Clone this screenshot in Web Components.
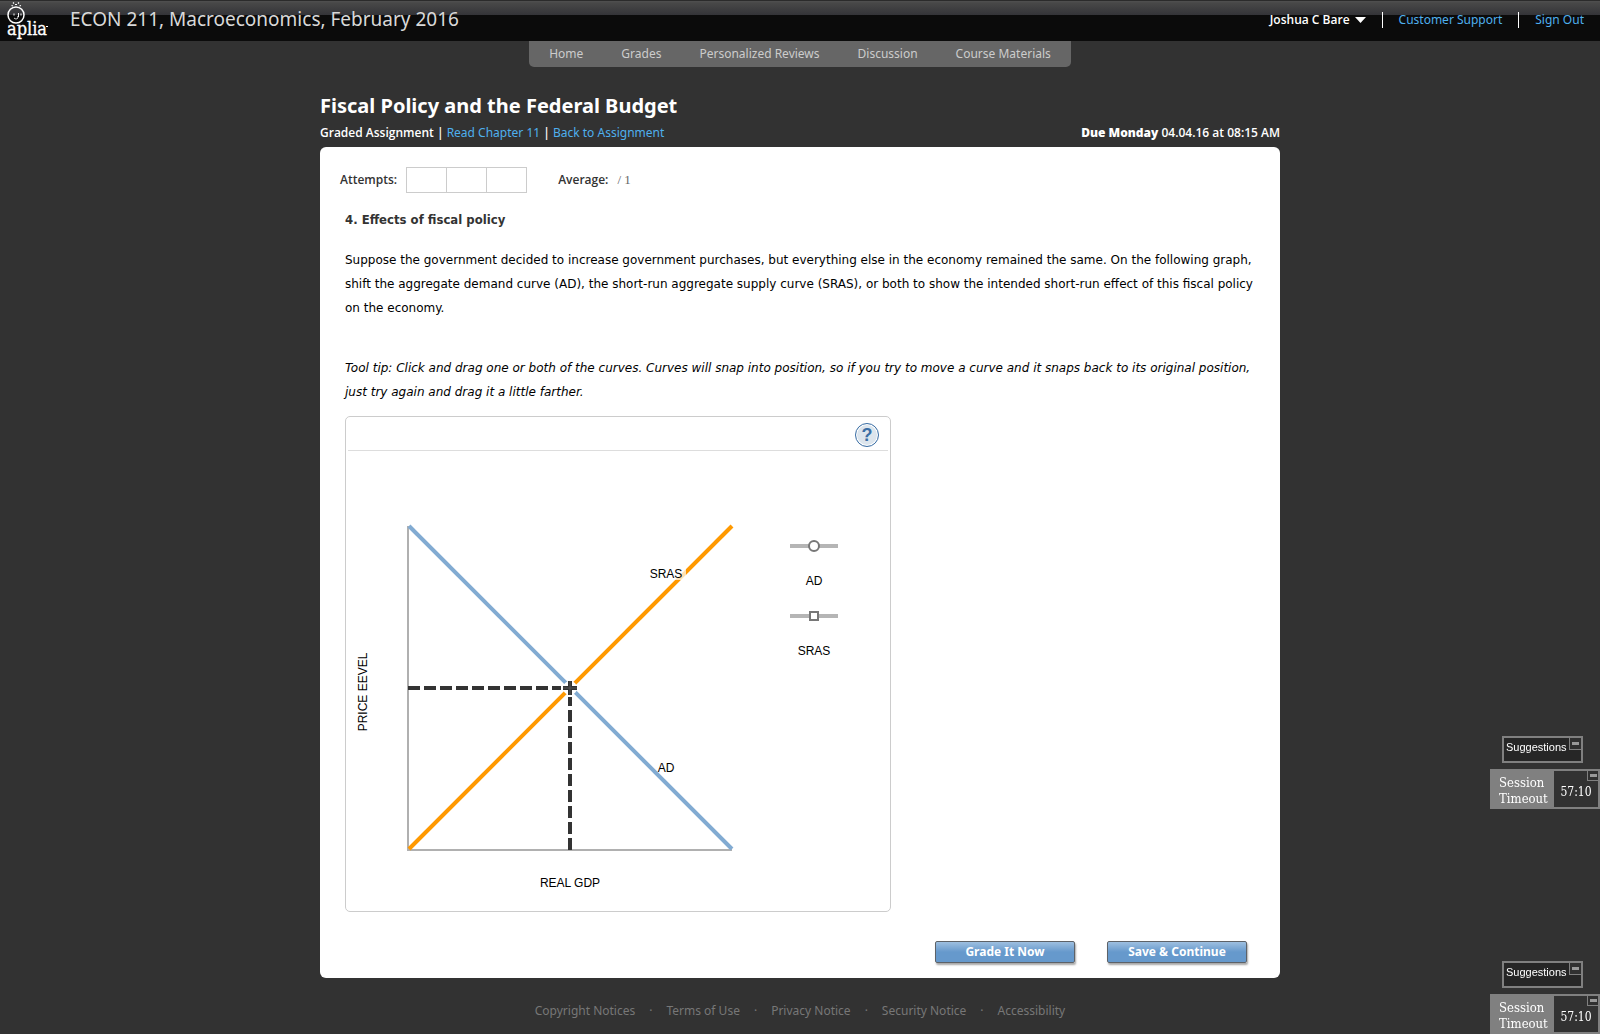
<!DOCTYPE html>
<html lang="en">
<head>
<meta charset="utf-8">
<title>Aplia: Fiscal Policy and the Federal Budget</title>
<style>
  body { margin: 0; background: #323232; color: #fff; font-family: "Noto Sans", "Open Sans", sans-serif; font-size: 12px; --link: #4fb0ee; --line: #ccc; --reading: "DejaVu Sans", sans-serif; --strong: "Open Sans", "Noto Sans", sans-serif; }
</style>
</head>
<body>
<aplia-page></aplia-page>
<script>
const define = (name, html) => {
  const template = document.createElement('template');
  template.innerHTML = html;
  customElements.define(name, class extends HTMLElement {
    constructor() {
      super();
      this.attachShadow({ mode: 'open' }).append(template.content.cloneNode(true));
    }
  });
};

define('aplia-logo', `
<style>
  :host { display: block; width: 44px; height: 41px; }
  svg { display: block; }
  text { font-family: "DejaVu Serif Condensed", "DejaVu Serif", serif; font-size: 18px; fill: #fff; stroke: #fff; stroke-width: .3px; }
</style>
<svg width="44" height="41" viewBox="0 0 44 41" role="img" aria-label="aplia">
  <g fill="none" stroke="#fff">
    <circle cx="9" cy="15" r="8" stroke-width="1.5"/>
    <path d="M4.500 5.500 6 6M6 2.500 7 3.500M11 3.500l1-1M12.500 6l1.500-.5M8 4.500h2" stroke-width="1.200"/>
    <path d="M7 13.500v2M14 13.500v2M11.500 13v4h-1.500" stroke-width="1"/>
    <path d="M7 18c1.500 1.500 3 1 4 0" stroke-width=".8"/>
  </g>
  <text x="0" y="35">aplia</text>
  <path d="M39 26.500h2" stroke="#fff"/>
</svg>`);

define('top-bar', `
<style>
  :host { display: flex; align-items: flex-start; justify-content: space-between; height: 41px; box-sizing: border-box; padding: 0 16px 0 7px;
    background: linear-gradient(#2b2b2b 1px, #505050 1px, #484848 3px, #343438 15px, #0b0b0b 15px); }
  .left, .right { display: flex; }
  .left { gap: 19px; }
  h1 { margin: 0; font-size: 19px; font-weight: 400; line-height: 39px; color: #d9d9d9; }
  .right { align-items: center; height: 39px; font-size: 12px; }
  a, button { line-height: 16px; }
  a { color: var(--link); text-decoration: none; padding-left: 16px; margin-left: 16px; border-left: 1px solid #fff; }
  button { border: 0; background: none; padding: 0; color: #fff; font: 600 12px/16px var(--strong); display: flex; align-items: center; gap: 5px; }
</style>
<div class="left"><aplia-logo></aplia-logo><h1><slot></slot></h1></div>
<div class="right">
  <button type="button">Joshua C Bare <svg width="11" height="6" aria-hidden="true"><path d="M0 0h11L5.500 6z" fill="#fff"/></svg></button>
  <a href="#support">Customer Support</a>
  <a href="#signout">Sign Out</a>
</div>`);

define('main-nav', `
<style>
  :host { display: flex; justify-content: center; }
  nav { display: flex; gap: 38px; padding: 0 20px; height: 26px; background: #666; border-radius: 0 0 5px 5px; }
  a { color: #ccc; font-size: 12px; line-height: 25px; text-decoration: none; white-space: nowrap; }
</style>
<nav aria-label="Course">
  <a href="#home">Home</a><a href="#grades">Grades</a><a href="#reviews">Personalized Reviews</a><a href="#discussion">Discussion</a><a href="#materials">Course Materials</a>
</nav>`);

define('assignment-head', `
<style>
  :host { display: block; padding-top: 24px; }
  h2 { margin: 0; font-size: 20px; line-height: 30px; font-weight: 700; }
  .row { display: flex; justify-content: space-between; padding-bottom: 3px; font: 600 12px/23px var(--strong); }
  a { color: var(--link); font-family: "Noto Sans", sans-serif; font-weight: 400; text-decoration: none; }
</style>
<h2>Fiscal Policy and the Federal Budget</h2>
<div class="row">
  <span>Graded Assignment | <a href="#chapter">Read Chapter 11</a> | <a href="#assignment">Back to Assignment</a></span>
  <span><b>Due Monday</b> 04.04.16 at 08:15 AM</span>
</div>`);

define('attempt-bar', `
<style>
  :host { display: flex; align-items: center; height: 26px; color: #333; font: 600 12px/24px var(--strong); }
  .boxes { display: flex; margin: 0 31px 0 9px; border: 1px solid var(--line); border-right: 0; }
  .boxes i { box-sizing: border-box; width: 40px; height: 24px; border-right: 1px solid var(--line); }
  .score { margin-left: 9px; font-family: "Liberation Serif", serif; font-size: 13px; font-weight: 400; color: #666; }
</style>
<span>Attempts:</span>
<span class="boxes"><i></i><i></i><i></i></span>
<span>Average:</span>
<span class="score">/ 1</span>`);

define('curve-graph', `
<style>
  :host { display: block; box-sizing: border-box; max-width: 546px; border: 1px solid var(--line); border-radius: 5px; padding: 0 2px; color: #000; }
  header { display: flex; justify-content: flex-end; align-items: center; height: 33px; padding: 0 9px 0 0; border-bottom: 1px solid #ddd; }
  button { box-sizing: border-box; width: 24px; height: 24px; margin-top: 2px; padding: 0; border: 1px solid #3a6ea5; border-radius: 50%; background: #dce5ed; box-shadow: inset 0 0 0 1px #fff; color: #3a6ea5; font: 700 18px/22px "Liberation Sans", sans-serif; }
  .body { display: flex; justify-content: space-between; padding: 0 50px 0 0; }
  svg { display: block; }
  text { font: 12px "Liberation Sans", sans-serif; fill: #000; text-anchor: middle; }
  .legend { display: flex; flex-direction: column; gap: 20px; padding-top: 87px; font: 12px/14px "Liberation Sans", sans-serif; text-align: center; }
  .legend div { display: flex; flex-direction: column; gap: 20px; }
</style>
<header><button type="button" aria-label="Help">?</button></header>
<div class="body">
  <svg width="400" height="460" viewBox="348 451 400 460" role="img" aria-label="Aggregate demand and supply">
    <path d="M408 526V850H732" fill="none" stroke="#b0b0b0" stroke-width="2"/>
    <path d="M409 526 732 849" stroke="#82abd2" stroke-width="4"/>
    <path d="M409 849 732 526" stroke="#ff9900" stroke-width="4"/>
    <circle cx="570" cy="688" r="7" fill="#fff"/>
    <path d="M408 688H561" stroke="#333" stroke-width="4" stroke-dasharray="12 4"/>
    <path d="M570 850V697" stroke="#333" stroke-width="4" stroke-dasharray="12 4"/>
    <path d="M563 688h14M570 681v14" stroke="#333" stroke-width="4"/>
    <path d="M563 688h14M570 681v14" stroke="#555" stroke-width="1"/>
    <rect x="648" y="566" width="38" height="14" fill="#fff" opacity=".7"/>
    <text x="666" y="578">SRAS</text>
    <text x="666" y="772">AD</text>
    <text x="570" y="887">REAL GDP</text>
    <text transform="translate(367 692) rotate(-90)">PRICE EEVEL</text>
  </svg>
  <div class="legend">
    <div><svg width="48" height="16" aria-hidden="true"><path d="M0 8h48" stroke="#b5b5b5" stroke-width="4"/><circle cx="24" cy="8" r="5" fill="#fff" stroke="#777" stroke-width="2"/></svg>AD</div>
    <div><svg width="48" height="16" aria-hidden="true"><path d="M0 8h48" stroke="#b5b5b5" stroke-width="4"/><rect x="20" y="4" width="8" height="8" fill="#fff" stroke="#777" stroke-width="2"/></svg>SRAS</div>
  </div>
</div>`);

define('action-button', `
<style>
  :host { display: block; }
  button { width: 140px; height: 22px; padding: 0; border: 1px solid #5d6268; border-radius: 2px; background: linear-gradient(#9dbfe0, #6699cc 50%); box-shadow: 1px 2px 2px rgba(0,0,0,.35); color: #fff; font: 700 12px/20px "Noto Sans", sans-serif; }
</style>
<button type="button"><slot></slot></button>`);

define('question-card', `
<style>
  :host { display: block; background: #fff; border-radius: 6px; padding: 20px 20px 15px; color: #000; }
  .question { padding: 15px 0 0 5px; font: 12px/24px var(--reading); }
  h3 { margin: 0 0 16px; font: 700 13px/24px "DejaVu Sans Condensed", "DejaVu Sans", sans-serif; color: #333; }
  p { margin: 0; padding: 0; }
  .tip { padding: 36px 0 12px; font-style: italic; }
  .text { max-width: 920px; }
  .actions { display: flex; justify-content: flex-end; gap: 32px; padding: 29px 13px 0 0; }
</style>
<attempt-bar></attempt-bar>
<div class="question">
  <h3>4. Effects of fiscal policy</h3>
  <div class="text">
    <p>Suppose the government decided to increase government purchases, but everything else in the economy remained the same. On the following graph, shift the aggregate demand curve (AD), the short-run aggregate supply curve (SRAS), or both to show the intended short-run effect of this fiscal policy on the economy.</p>
    <p class="tip">Tool tip: Click and drag one or both of the curves. Curves will snap into position, so if you try to move a curve and it snaps back to its original position, just try again and drag it a little farther.</p>
  </div>
  <curve-graph></curve-graph>
</div>
<div class="actions"><action-button>Grade It Now</action-button><action-button>Save &amp; Continue</action-button></div>`);

define('page-footer', `
<style>
  :host { display: flex; justify-content: center; gap: 14px; padding-top: 24px; font-size: 12px; line-height: 18px; color: #777; }
  a { color: inherit; text-decoration: none; }
</style>
<a href="#copyright">Copyright Notices</a><span>·</span><a href="#terms">Terms of Use</a><span>·</span><a href="#privacy">Privacy Notice</a><span>·</span><a href="#security">Security Notice</a><span>·</span><a href="#accessibility">Accessibility</a>`);

define('session-widget', `
<style>
  :host { display: flex; flex-direction: column; width: 110px; }
  .suggest { align-self: flex-end; box-sizing: border-box; display: flex; justify-content: space-between; width: 81px; height: 27px; margin: 0 17px 6px 0; padding-left: 2px; border: 2px solid #808080; background: #262626; font: 11px/18px "Liberation Sans", sans-serif; }
  .time { box-sizing: border-box; display: flex; height: 40px; font: 13px/16px "DejaVu Serif Condensed", "DejaVu Serif", serif; color: #fff; }
  .label { box-sizing: border-box; width: 64px; padding: 6px 0 0 9px; background: #808080; }
  .clock { box-sizing: border-box; flex: 1; display: flex; flex-direction: column; align-items: center; border: 2px solid #808080; border-left: 0; font-size: 12px; }
  .min { box-sizing: border-box; flex: none; width: 12px; height: 12px; padding: 0; border: solid #808080; border-width: 0 0 1px 1px; background: #303030; display: flex; align-items: center; justify-content: center; }
  .min::before { content: ""; width: 7px; height: 3px; background: #999; }
  .clock .min { align-self: flex-end; width: 11px; height: 10px; }
  .clock span { padding-top: 3px; }
</style>
<div class="suggest"><span>Suggestions</span><button class="min" type="button" aria-label="Minimize suggestions"></button></div>
<div class="time"><div class="label">Session Timeout</div><div class="clock"><button class="min" type="button" aria-label="Minimize timer"></button><span>57:10</span></div></div>`);

define('aplia-page', `
<style>
  :host { display: block; }
  main { box-sizing: border-box; max-width: 960px; margin: 0 auto; }
  aside { position: fixed; right: 0; bottom: 0; display: flex; flex-direction: column; gap: 152px; }
</style>
<top-bar>ECON 211, Macroeconomics, February 2016</top-bar>
<main-nav></main-nav>
<main>
  <assignment-head></assignment-head>
  <question-card></question-card>
</main>
<page-footer></page-footer>
<aside><session-widget></session-widget><session-widget></session-widget></aside>`);
</script>
</body>
</html>
